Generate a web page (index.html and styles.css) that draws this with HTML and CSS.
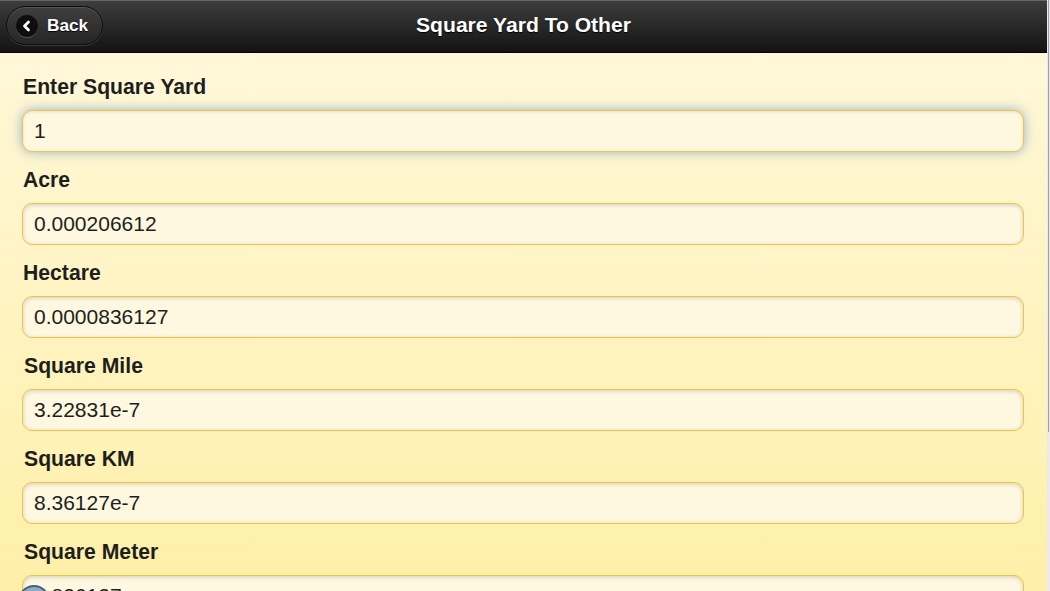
FILE: index.html
```html
<!DOCTYPE html>
<html>
<head>
<meta charset="utf-8">
<link rel="stylesheet" href="styles.css">
</head>
<body>
<div class="app">
  <div class="page">
    <header class="bar">
      <a class="back">
        <span class="back-icon">
          <svg width="12" height="12" viewBox="0 0 12 12"><path d="M7.5 2 L3.5 6 L7.5 10" fill="none" stroke="#fff" stroke-width="2.8" stroke-linecap="round" stroke-linejoin="round"/></svg>
        </span>
        <span class="back-text">Back</span>
      </a>
      <h1 class="title">Square Yard To Other</h1>
    </header>
    <main class="content">
      <div class="field">
        <label class="label">Enter Square Yard</label>
        <div class="input focus">1</div>
      </div>
      <div class="field">
        <label class="label">Acre</label>
        <div class="input">0.000206612</div>
      </div>
      <div class="field">
        <label class="label">Hectare</label>
        <div class="input">0.0000836127</div>
      </div>
      <div class="field">
        <label class="label indent">Square Mile</label>
        <div class="input">3.22831e-7</div>
      </div>
      <div class="field">
        <label class="label indent">Square KM</label>
        <div class="input">8.36127e-7</div>
      </div>
      <div class="field">
        <label class="label indent">Square Meter</label>
        <div class="input">0.836127</div>
      </div>
    </main>
    <div class="fab"></div>
  </div>
  <div class="scroll"><div class="thumb"></div></div>
</div>
</body>
</html>
```
FILE: styles.css
```css
html, body {
  margin: 0;
  padding: 0;
  height: 591px;
  overflow: hidden;
}
body {
  font-family: "Liberation Sans", Arial, sans-serif;
  background: #f3f3f7;
}
.app {
  display: flex;
  height: 591px;
}
.page {
  position: relative;
  width: 1047px;
  height: 591px;
  overflow: hidden;
  background: linear-gradient(#fff8dd, #fef0a8);
}
.bar {
  position: relative;
  height: 51px;
  border-top: 1px solid #5f6670;
  border-bottom: 1px solid #000;
  background: linear-gradient(#3d3d3d, #131313);
  display: flex;
  align-items: center;
  justify-content: center;
}
.back {
  position: absolute;
  left: 6px;
  top: 5px;
  box-sizing: border-box;
  width: 97px;
  height: 39px;
  border: 1px solid #0d0d0d;
  border-radius: 20px;
  background: linear-gradient(#3f3f3f, #262626);
  box-shadow: inset 0 1px 0 rgba(255,255,255,0.12), 0 1px 0 rgba(255,255,255,0.15);
  display: flex;
  align-items: center;
  padding-left: 9px;
  gap: 9px;
}
.back-icon {
  width: 22px;
  height: 22px;
  border-radius: 50%;
  background: #0e0e0e;
  box-shadow: 0 1px 0 rgba(255,255,255,0.2);
  display: flex;
  align-items: center;
  justify-content: center;
}
.back-text {
  color: #fff;
  font-weight: bold;
  font-size: 17.2px;
  text-shadow: 0 1px 1px #000;
}
.title {
  margin: 0;
  color: #fff;
  font-size: 21.1px;
  font-weight: bold;
  text-shadow: 0 1px 1px #000;
  position: relative;
  top: -2px;
}
.content {
  padding: 22px 23px 0 22px;
}
.field {
  margin-bottom: 16px;
}
.label {
  display: block;
  font-size: 21.2px;
  font-weight: bold;
  line-height: 24px;
  color: #1e1e1e;
  padding-left: 1px;
  margin-bottom: 11px;
}
.label.indent {
  padding-left: 2px;
}
.input {
  box-sizing: border-box;
  height: 42px;
  border: 1px solid #f0c345;
  border-radius: 10px;
  background: #fff8e0;
  box-shadow: inset 0 1px 4px rgba(0,0,0,0.18);
  padding-left: 11px;
  font-size: 21px;
  line-height: 40px;
  color: #1e1e1e;
}
.input.focus {
  box-shadow: 0 0 12px rgba(60,125,185,0.55), inset 0 1px 3px rgba(0,0,0,0.1);
}
.fab {
  position: absolute;
  left: 18px;
  top: 585px;
  width: 32px;
  height: 32px;
  box-sizing: border-box;
  border-radius: 50%;
  border: 2px solid #42607e;
  background: #8fa9c2;
}
.scroll {
  width: 3px;
  height: 591px;
  background: #e9e9ef;
  position: relative;
}
.thumb {
  position: absolute;
  left: 1px;
  top: 0;
  width: 1px;
  height: 432px;
  background: #9ea0a6;
}
```
